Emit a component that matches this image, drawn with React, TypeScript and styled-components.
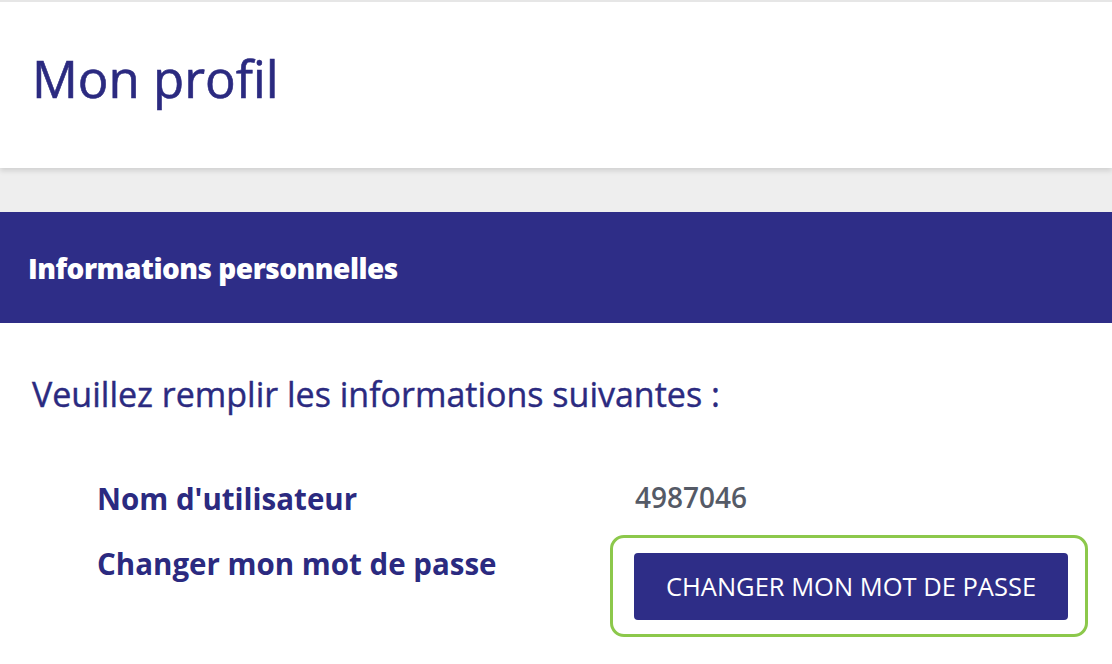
import React from 'react';
import styled, { createGlobalStyle } from 'styled-components';

const GlobalStyle = createGlobalStyle`
  html, body {
    margin: 0;
    padding: 0;
    background: #ffffff;
    font-family: "Open Sans", "Noto Sans", Arial, sans-serif;
  }
`;

const Page = styled.div`
  width: 1112px;
  height: 664px;
  overflow: hidden;
  background: #ffffff;
  border-top: 2px solid #e6e6e6;
  box-sizing: border-box;
`;

const Header = styled.header`
  height: 166px;
  box-sizing: border-box;
  background: #ffffff;
  padding: 41px 32px 0;
  position: relative;
  z-index: 1;
  box-shadow: 0 3px 5px rgba(0, 0, 0, 0.12);
`;

const Title = styled.h1`
  margin: 0;
  font-size: 51px;
  line-height: normal;
  font-weight: 400;
  color: #2b2a80;
  letter-spacing: 0;
  -webkit-text-stroke: 0.6px #2b2a80;
`;

const Gap = styled.div`
  height: 44px;
  background: #eeeeee;
`;

const SectionBar = styled.div`
  height: 111px;
  background: #2e2d87;
  display: flex;
  align-items: center;
  padding: 0 28px;
`;

const SectionTitle = styled.h2`
  margin: 0;
  font-size: 28px;
  font-weight: 800;
  color: #ffffff;
  letter-spacing: -0.5px;
`;

const Body = styled.div`
  padding: 48px 32px 0;
`;

const Intro = styled.p`
  margin: 0 0 60px;
  font-size: 34px;
  line-height: 46px;
  font-weight: 400;
  color: #2b2a80;
  letter-spacing: 0;
  -webkit-text-stroke: 0.4px #2b2a80;
`;

const Fields = styled.div`
  display: grid;
  grid-template-columns: 538px auto;
  row-gap: 21px;
  padding-left: 65px;
  align-items: start;
`;

const Label = styled.div`
  font-size: 29.5px;
  font-weight: 700;
  color: #2b2a80;
  line-height: 44px;
`;

const Value = styled.div`
  font-size: 28px;
  font-weight: 600;
  color: #555a66;
  line-height: 44px;
  margin-top: -2px;
`;

const Highlight = styled.div`
  box-sizing: border-box;
  margin-left: -25px;
  margin-top: -7px;
  width: 478px;
  height: 102px;
  border: 3px solid #8cc84b;
  border-radius: 14px;
  display: flex;
  align-items: center;
  padding-left: 21px;
`;

const Button = styled.button`
  width: 434px;
  height: 67px;
  border: none;
  border-radius: 4px;
  background: #2e2d87;
  color: #ffffff;
  font-family: inherit;
  font-size: 25.5px;
  font-weight: 400;
  cursor: pointer;
`;

export default function App() {
  return (
    <>
      <GlobalStyle />
      <Page>
        <Header>
          <Title>Mon profil</Title>
        </Header>
        <Gap />
        <SectionBar>
          <SectionTitle>Informations personnelles</SectionTitle>
        </SectionBar>
        <Body>
          <Intro>Veuillez remplir les informations suivantes :</Intro>
          <Fields>
            <Label>Nom d'utilisateur</Label>
            <Value>4987046</Value>
            <Label>Changer mon mot de passe</Label>
            <Highlight>
              <Button>CHANGER MON MOT DE PASSE</Button>
            </Highlight>
          </Fields>
        </Body>
      </Page>
    </>
  );
}
